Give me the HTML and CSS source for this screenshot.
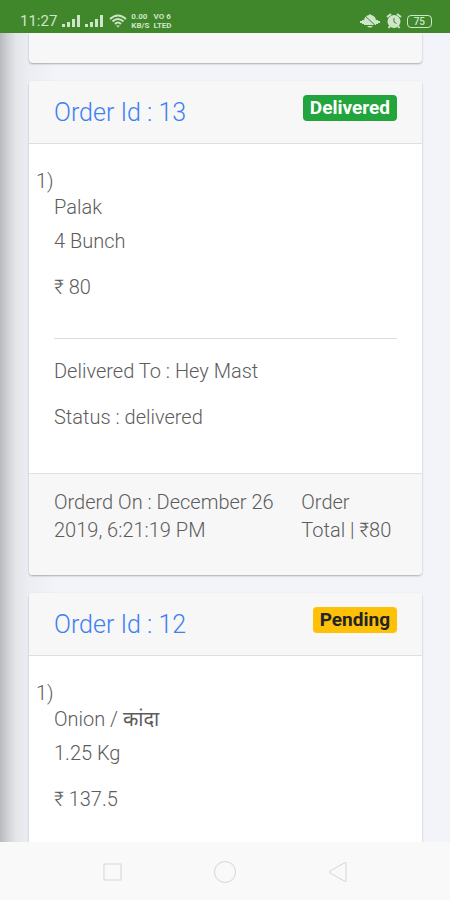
FILE: index.html
```html
<!DOCTYPE html>
<html lang="en">
<head>
<meta charset="utf-8">
<meta name="viewport" content="width=device-width, initial-scale=1">
<title>Orders</title>
<link rel="stylesheet" href="styles.css">
</head>
<body>
<div class="screen">
  <header class="status-bar">
    <div class="status-group">
      <span class="clock">11:27</span>
      <svg class="icon" width="44" height="14" viewBox="0 0 44 14" fill="currentColor" aria-hidden="true">
        <path d="M1 10h3v3H1zM6 8h3v5H6zM11 5h3v8h-3zM16 1h3v12h-3zM24 10h3v3h-3zM29 8h3v5h-3zM34 5h3v8h-3zM39 1h3v12h-3z"/>
      </svg>
      <svg class="icon" width="18" height="14" viewBox="0 0 18 14" fill="none" stroke="currentColor" stroke-width="2" aria-hidden="true">
        <path d="M1 5Q9-2 17 5M3.500 7.500Q9 2.500 14.500 7.500M6 10Q9 7 12 10"/>
        <path d="M7 11.500h4L9 13.500z" fill="currentColor" stroke="none"/>
      </svg>
      <span class="mini"><span>0.00</span><span>KB/S</span></span>
      <span class="mini"><span>VO 6</span><span>LTED</span></span>
    </div>
    <div class="status-group status-right">
      <svg class="icon" width="22" height="16" viewBox="0 0 22 16" aria-hidden="true">
        <path d="M5 12V8q0-5 5-6 1-2 2 0 5 1 5 6v4zM8 13h6q-3 3-6 0z" fill="currentColor"/>
        <path d="M1 9h2M4 7v4M18 7v4M19 9h2" stroke="currentColor" stroke-width="2"/>
        <path d="M5 2l13 12" class="slash"/>
      </svg>
      <svg class="icon" width="16" height="16" viewBox="0 0 16 16" aria-hidden="true">
        <circle cx="8" cy="8.500" r="6.500" fill="currentColor"/>
        <path d="M1 4l4-3M11 1l4 3M4 13l-1.500 2M12 13l1.500 2" stroke="currentColor" stroke-width="2"/>
        <path d="M8 5v4l2.500 1.500" class="hand"/>
      </svg>
      <span class="battery">75</span>
    </div>
  </header>

  <main class="orders">
    <article class="card card-previous"></article>

    <article class="card">
      <header class="card-header">
        <h2><a href="#order-13">Order Id : 13</a></h2>
        <span class="badge badge-success">Delivered</span>
      </header>
      <div class="card-body">
        <p class="index">1)</p>
        <p class="name">Palak</p>
        <p>4 Bunch</p>
        <p>₹ 80</p>
        <hr>
        <p>Delivered To : Hey Mast</p>
        <p>Status : delivered</p>
      </div>
      <footer class="card-footer">
        <p class="date">Orderd On : December 26 2019, 6:21:19 PM</p>
        <p class="total">Order Total | ₹80</p>
      </footer>
    </article>

    <article class="card">
      <header class="card-header">
        <h2><a href="#order-12">Order Id : 12</a></h2>
        <span class="badge badge-warning">Pending</span>
      </header>
      <div class="card-body">
        <p class="index">1)</p>
        <p class="name">Onion / <span class="local-name" lang="hi">कांदा</span></p>
        <p>1.25 Kg</p>
        <p>₹ 137.5</p>
        <hr>
      </div>
    </article>
  </main>

  <nav class="nav-bar" aria-label="System navigation">
    <button type="button" aria-label="Recent apps">
      <svg width="24" height="24" viewBox="0 0 24 24"><rect x="4" y="4" width="17" height="16"/></svg>
    </button>
    <button type="button" aria-label="Home">
      <svg width="24" height="24" viewBox="0 0 24 24"><circle cx="12" cy="12" r="10.500"/></svg>
    </button>
    <button type="button" aria-label="Back">
      <svg width="24" height="24" viewBox="0 0 24 24"><path d="M20 3v18q0 1-1 .5L4 13q-1-1 0-2l15-8.500q1-.5 1 .5z"/></svg>
    </button>
  </nav>
</div>
</body>
</html>
```
FILE: styles.css
```css
* {
  box-sizing: border-box;
}

body {
  margin: 0;
  font-family: Roboto, "Noto Sans", "Liberation Sans", sans-serif;
  font-size: 20px;
  font-weight: 300;
  line-height: 28px;
  color: #5c5c5c;
}

p,
h2 {
  margin: 0;
}

.screen {
  display: flex;
  flex-direction: column;
  height: 100vh;
  overflow: hidden;
}

.status-bar {
  display: flex;
  justify-content: space-between;
  flex: none;
  height: 33px;
  padding: 12px 18px 0 20px;
  background: #40872c;
  color: #cfe5c9;
}

.status-group {
  display: flex;
  align-items: center;
  gap: 4px;
  height: 18px;
}

.status-right {
  gap: 5px;
}

.icon {
  flex: none;
}

.clock {
  font-size: 15px;
  font-weight: 400;
  line-height: 18px;
}

.mini {
  display: flex;
  flex-direction: column;
  font-size: 8px;
  font-weight: 700;
  line-height: 9px;
}

.slash,
.hand {
  fill: none;
  stroke: #40872c;
  stroke-width: 1;
}

.battery {
  padding: 0 6px;
  border: 1px solid currentColor;
  border-radius: 4px;
  font-size: 10px;
  font-weight: 500;
  line-height: 11px;
}

.orders {
  display: flex;
  flex: 1;
  flex-direction: column;
  gap: 18px;
  min-height: 0;
  overflow: hidden;
  padding: 0 28px 0 29px;
  background: linear-gradient(to right, #b9babc 0, #d0d2d5 8px, #e4e6ea 16px, #ebedf2 28px, #f2f4f9 56px);
}

.card {
  flex: none;
  overflow: hidden;
  border-radius: 4px;
  background: #fff;
  box-shadow: 0 1px 2px rgba(0, 0, 0, 0.3);
}

.card-previous {
  height: 30px;
  border-radius: 0 0 4px 4px;
  background: #f7f7f7;
}

.card-header {
  display: flex;
  align-items: flex-start;
  justify-content: space-between;
  padding: 14px 25px 12px;
  border-bottom: 1px solid #dfdfdf;
  background: #f7f7f7;
}

h2 {
  font-size: 25px;
  font-weight: 300;
  line-height: 36px;
}

h2 a {
  color: #3f80f2;
  text-decoration: none;
}

.badge {
  padding: 0 7px;
  border-radius: 4px;
  font-size: 19px;
  font-weight: 700;
  line-height: 26px;
}

.badge-success {
  background: #22a53c;
  color: #fff;
}

.badge-warning {
  background: #ffc008;
  color: #212529;
}

.card-body {
  padding: 26px 25px 24px;
}

.card-body p {
  margin-bottom: 18px;
}

.card-body .index {
  margin: 0 0 0 -18px;
  line-height: 23px;
}

.card-body .name {
  margin-bottom: 6px;
}

.local-name {
  font-weight: 400;
}

hr {
  margin: 37px 0 18px;
  border: 0;
  border-top: 1px solid #dcdcdc;
}

.card-footer {
  display: flex;
  gap: 24px;
  padding: 14px 25px 31px;
  border-top: 1px solid #dfdfdf;
  background: #f7f7f7;
}

.date {
  flex: 7;
}

.total {
  flex: 3;
}

.nav-bar {
  display: flex;
  flex: none;
  align-items: center;
  justify-content: space-around;
  height: 58px;
  padding: 2px 56px 0;
  background: #f9f9f9;
}

.nav-bar button {
  display: flex;
  padding: 0;
  border: 0;
  background: none;
}

.nav-bar svg {
  fill: none;
  stroke: #d5d5d5;
  stroke-width: 1;
}
```
